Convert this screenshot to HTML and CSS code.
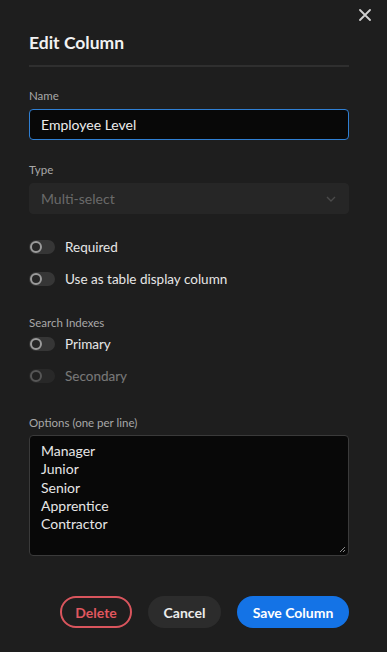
FILE: index.html
```html
<!DOCTYPE html>
<html lang="en">
<head>
<meta charset="utf-8">
<title>Edit Column</title>
<link rel="stylesheet" href="styles.css">
</head>
<body>
<div class="panel">
  <button class="close" aria-label="Close">
    <svg width="12" height="12" viewBox="0 0 12 12"><path d="M1 1L11 11M11 1L1 11" stroke="#d0d0d0" stroke-width="1.8" stroke-linecap="round"/></svg>
  </button>
  <h1 class="title">Edit Column</h1>
  <div class="divider"></div>

  <div class="field">
    <label class="label">Name</label>
    <div class="input focused">Employee Level</div>
  </div>

  <div class="field">
    <label class="label">Type</label>
    <div class="input select">
      <span>Multi-select</span>
      <svg width="10" height="6" viewBox="0 0 10 6"><path d="M1 1L5 5L9 1" stroke="#4a4a4a" stroke-width="1.4" fill="none"/></svg>
    </div>
  </div>

  <div class="toggles">
    <div class="toggle-row"><span class="toggle"><span class="knob"></span></span><span class="toggle-text">Required</span></div>
    <div class="toggle-row"><span class="toggle"><span class="knob"></span></span><span class="toggle-text">Use as table display column</span></div>
  </div>

  <div class="section">
    <div class="label">Search Indexes</div>
    <div class="toggle-row tight"><span class="toggle"><span class="knob"></span></span><span class="toggle-text">Primary</span></div>
    <div class="toggle-row disabled"><span class="toggle"><span class="knob"></span></span><span class="toggle-text">Secondary</span></div>
  </div>

  <div class="field options">
    <label class="label">Options (one per line)</label>
    <div class="textarea">
      <div>Manager</div>
      <div>Junior</div>
      <div>Senior</div>
      <div>Apprentice</div>
      <div>Contractor</div>
      <svg class="grip" width="7" height="7" viewBox="0 0 7 7"><path d="M6 1L1 6M6 4L4 6" stroke="#9a9a9a" stroke-width="0.9"/></svg>
    </div>
  </div>

  <div class="actions">
    <button class="btn delete">Delete</button>
    <button class="btn cancel">Cancel</button>
    <button class="btn save">Save Column</button>
  </div>
</div>
</body>
</html>
```
FILE: styles.css
```css
* { box-sizing: border-box; }
html, body {
  margin: 0;
  padding: 0;
  background: #1e1e1e;
  font-family: Lato, "Noto Sans", sans-serif;
  color: #e6e6e6;
}
.panel {
  position: relative;
  width: 387px;
  height: 652px;
  padding: 30px 38px 0 29px;
}
.close {
  position: absolute;
  top: 9px;
  right: 16px;
  width: 12px;
  height: 12px;
  padding: 0;
  border: 0;
  background: none;
  display: flex;
}
.title {
  margin: 0;
  font-size: 17.5px;
  font-weight: 700;
  line-height: 26px;
  color: #f2f2f2;
}
.divider {
  height: 2px;
  background: #2f2f2f;
  margin-top: 9px;
  margin-bottom: 21px;
}
.field { display: flex; flex-direction: column; }
.field + .field { margin-top: 22px; }
.label {
  font-size: 11.5px;
  line-height: 16px;
  color: #a8a8a8;
  margin-bottom: 5px;
}
.input {
  height: 31px;
  border-radius: 4px;
  background: #080808;
  border: 1px solid #2a2a2a;
  display: flex;
  align-items: center;
  padding: 0 11px;
  font-size: 14px;
  color: #ededed;
}
.input.focused { border-color: #2f7fd3; }
.input.select {
  background: #262626;
  border-color: #262626;
  color: #6a6a6a;
  justify-content: space-between;
  padding-right: 12px;
}
.toggles {
  margin-top: 26px;
  display: flex;
  flex-direction: column;
  gap: 18px;
}
.toggle-row {
  display: flex;
  align-items: center;
  gap: 10px;
  height: 14px;
}
.toggle {
  width: 26px;
  height: 14px;
  border-radius: 7px;
  background: #363636;
  display: flex;
  align-items: center;
  padding: 1px;
}
.knob {
  width: 12px;
  height: 12px;
  border-radius: 50%;
  background: #262626;
  border: 2px solid #9b9b9b;
}
.toggle-text {
  font-size: 13.5px;
  color: #e6e6e6;
}
.section {
  margin-top: 29px;
  display: flex;
  flex-direction: column;
}
.section .label { margin-bottom: 6px; }
.toggle-row.tight + .toggle-row { margin-top: 18px; }
.toggle-row.disabled { opacity: 0.45; }
.options { margin-top: 32px; }
.options .label { margin-bottom: 4px; }
.textarea {
  position: relative;
  height: 121px;
  border-radius: 4px;
  background: #080808;
  border: 1px solid #3a3a3a;
  padding: 6px 11px;
  font-size: 14px;
  line-height: 18.3px;
  color: #e6e6e6;
}
.grip { position: absolute; right: 2px; bottom: 2px; }
.actions {
  margin-top: 40px;
  display: flex;
  justify-content: flex-end;
  gap: 16px;
}
.btn {
  height: 32px;
  border-radius: 16px;
  font-family: inherit;
  font-size: 14px;
  font-weight: 700;
  padding: 0;
  white-space: nowrap;
  border: 2px solid transparent;
}
.delete {
  background: transparent;
  border-color: #d9555d;
  color: #e0575f;
  width: 72px;
}
.cancel {
  background: #2c2c2c;
  color: #ececec;
  width: 73px;
}
.save {
  background: #1473e6;
  color: #ffffff;
  width: 112px;
}
```
